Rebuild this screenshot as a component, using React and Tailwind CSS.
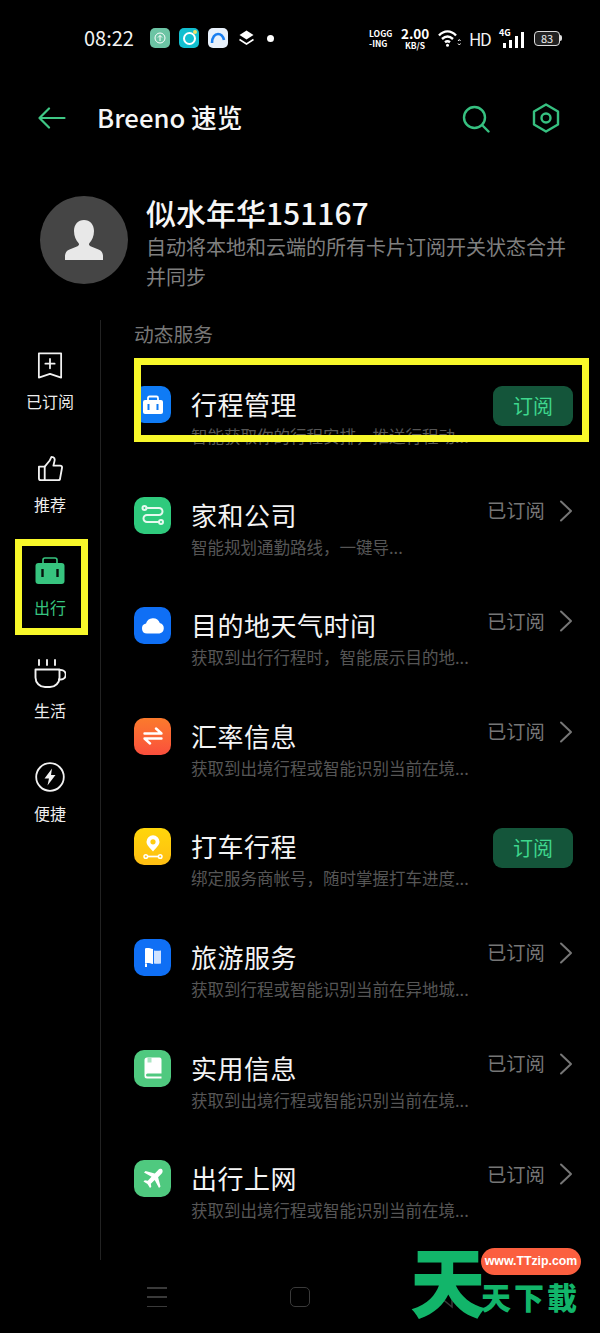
import React from "react";

const FONT = "font-['Noto_Sans_CJK_SC','Noto_Sans',sans-serif]";

// ── Sidebar icons ──────────────────────────────────────
function BookmarkIcon() {
  return (
    <svg width="26" height="29" viewBox="0 0 28 30" fill="none" stroke="#f2f2f2" strokeWidth="1.9" strokeLinejoin="round" strokeLinecap="round">
      <path d="M2 2h24v26l-12-4-12 4z" />
      <path d="M14 8v10M9 13h10" />
    </svg>
  );
}

function ThumbIcon() {
  return (
    <svg width="27" height="27" viewBox="0 0 28 28" fill="none" stroke="#f2f2f2" strokeWidth="1.9" strokeLinejoin="round" strokeLinecap="round">
      <path d="M2 12h6v14H4a2 2 0 0 1-2-2z" />
      <path d="M8 12l5-6 2-4c3 0 4 2 3 5l-1 4h7a2 2 0 0 1 2 2l-2 11a2 2 0 0 1-2 2H8" />
    </svg>
  );
}

function BagIcon() {
  return (
    <svg width="30" height="28" viewBox="0 0 30 28" fill="none">
      <path d="M8 7V3a2 2 0 0 1 2-2h10a2 2 0 0 1 2 2v4" stroke="#37c47f" strokeWidth="1.6" />
      <rect x="0.5" y="6" width="29" height="21" rx="3" fill="#37c47f" />
      <path d="M7.5 12v8M22.5 12v8" stroke="#06140d" strokeWidth="2.4" />
    </svg>
  );
}

function CupIcon() {
  return (
    <svg width="32" height="30" viewBox="0 0 32 30" fill="none" stroke="#f2f2f2" strokeWidth="1.9" strokeLinecap="round" strokeLinejoin="round">
      <path d="M5 1v5M13 1v5M21 1v5" />
      <path d="M1.500 10.500h24v8a9.500 9.500 0 0 1-9.500 9.500H11a9.500 9.500 0 0 1-9.500-9.500z" />
      <path d="M25.500 11h1.500a3.800 3.800 0 0 1 0 9.500h-2" />
    </svg>
  );
}

function BoltIcon() {
  return (
    <svg width="30" height="30" viewBox="0 0 30 30" fill="none">
      <circle cx="15" cy="15" r="13.800" stroke="#f2f2f2" strokeWidth="1.800" />
      <path d="M17 6.500L9.500 16.500h4.500L12.500 23.500l8-10.500H16z" fill="#f2f2f2" />
    </svg>
  );
}

// ── List tile glyphs ───────────────────────────────────
const glyphs = {
  bag: (
    <svg width="22" height="20" viewBox="0 0 22 20" fill="none">
      <path d="M6 6V3a1.500 1.500 0 0 1 1.500-1.500h7A1.500 1.500 0 0 1 16 3v3" stroke="#fff" strokeWidth="1.800" />
      <rect x="1" y="5" width="20" height="14" rx="2" fill="#fff" />
      <path d="M6.500 9v6M15.500 9v6" stroke="#0f7bf5" strokeWidth="2" />
    </svg>
  ),
  route: (
    <svg width="24" height="22" viewBox="0 0 24 22" fill="none" stroke="#e6f9ef" strokeWidth="2">
      <circle cx="3.500" cy="4" r="2" />
      <circle cx="20" cy="18" r="2" />
      <path d="M5.500 4H18a3.500 3.500 0 0 1 0 7H6a3.500 3.500 0 0 0 0 7h12" strokeLinecap="round" />
    </svg>
  ),
  cloud: (
    <svg width="24" height="17" viewBox="0 0 24 17">
      <path d="M6 16.500a5 5 0 0 1-1-9.900 7.200 7.200 0 0 1 13.800-.6A5.400 5.400 0 0 1 18.500 16.500z" fill="#fff" />
    </svg>
  ),
  swap: (
    <svg width="20" height="18" viewBox="0 0 20 18" fill="none" stroke="#fff" strokeWidth="2.400" strokeLinecap="round" strokeLinejoin="round">
      <path d="M1.500 6.500h17L13 1.500" />
      <path d="M18.500 11.500h-17L7 16.500" />
    </svg>
  ),
  pin: (
    <svg width="20" height="26" viewBox="0 0 20 26" fill="none" stroke="#fff">
      <path d="M10 17.500c-3.500-4-6.500-6.500-6.500-9.700a6.500 6.500 0 0 1 13 0c0 3.200-3 5.700-6.500 9.700z" fill="#fff" stroke="none" />
      <circle cx="10" cy="7.800" r="2.600" fill="#ffcd10" stroke="none" />
      <circle cx="2.800" cy="22.500" r="1.800" strokeWidth="1.500" />
      <circle cx="17.200" cy="22.500" r="1.800" strokeWidth="1.500" />
      <path d="M4.600 22.500h10.800" strokeWidth="1.700" />
    </svg>
  ),
  flag: (
    <svg width="18" height="20" viewBox="0 0 18 20">
      <path d="M1 1.500c3-1 5 0 8 .5v15c-3-.5-5-1.500-8-.5z" fill="#fff" />
      <path d="M2 16.500V20" stroke="#fff" strokeWidth="2" />
      <path d="M10 3.500c2.500.5 4.500.3 7 0v13c-2.500.3-4.500.5-7 0z" fill="#cfe2ff" />
    </svg>
  ),
  book: (
    <svg width="18" height="22" viewBox="0 0 18 22">
      <path d="M3 0.500h12.500a2 2 0 0 1 2 2V16.500H3.500a1.500 1.500 0 0 0 0 3h14V21.500H3a2.500 2.500 0 0 1-2.500-2.500V3A2.500 2.500 0 0 1 3 0.500z" fill="#fff" />
      <rect x="3.500" y="0.500" width="4" height="5" fill="#a9e6c2" />
    </svg>
  ),
  plane: (
    <svg width="22" height="22" viewBox="0 0 22 22">
      <path d="M20.500 1.500c-1.200-1.200-3.200-.6-4.500.7l-3.200 3.200L3.500 3 2 4.500l7.500 4.300-3.700 3.900-3-.5L1.500 13.500l4 2.500 2.500 4 1.300-1.300-.5-3 3.900-3.700L17 20l1.500-1.500-2.400-9.300 3.200-3.200c1.300-1.300 1.900-3.300.7-4.500z" fill="#fff" />
    </svg>
  ),
};

// ── Data ───────────────────────────────────────────────
const rows = [
  { title: "行程管理", sub: "智能获取你的行程安排，推送行程动...", tile: "bg-[#0f7bf5]", glyph: "bag", subscribed: false },
  { title: "家和公司", sub: "智能规划通勤路线，一键导...", tile: "bg-[#2fca7d]", glyph: "route", subscribed: true },
  { title: "目的地天气时间", sub: "获取到出行行程时，智能展示目的地...", tile: "bg-[#0f6ff5]", glyph: "cloud", subscribed: true },
  { title: "汇率信息", sub: "获取到出境行程或智能识别当前在境...", tile: "bg-linear-to-b from-[#fb7a2c] to-[#fa4e3c]", glyph: "swap", subscribed: true },
  { title: "打车行程", sub: "绑定服务商帐号，随时掌握打车进度...", tile: "bg-linear-to-b from-[#ffd60a] to-[#ffbe12]", glyph: "pin", subscribed: false },
  { title: "旅游服务", sub: "获取到行程或智能识别当前在异地城...", tile: "bg-[#0f6ff5]", glyph: "flag", subscribed: true },
  { title: "实用信息", sub: "获取到出境行程或智能识别当前在境...", tile: "bg-[#4fc97f]", glyph: "book", subscribed: true },
  { title: "出行上网", sub: "获取到出境行程或智能识别当前在境...", tile: "bg-[#4fc97f]", glyph: "plane", subscribed: true },
];

const tabs = [
  { label: "已订阅", icon: <BookmarkIcon /> },
  { label: "推荐", icon: <ThumbIcon /> },
  { label: "出行", icon: <BagIcon />, active: true },
  { label: "生活", icon: <CupIcon /> },
  { label: "便捷", icon: <BoltIcon /> },
];

function StatusBar() {
  return (
    <div className="h-[76px] flex items-center pl-[84px] pr-[38px] text-white">
      <span className="text-[20px] leading-none w-[66px] text-[#f4f4f4]">08:22</span>
      <div className="flex items-center gap-[9px]">
        <div className="w-5 h-5 rounded-[5px] bg-[#6cc4a4] flex items-center justify-center">
          <svg width="12" height="12" viewBox="0 0 12 12" fill="none" stroke="#fff" strokeWidth="1">
            <circle cx="6" cy="6" r="5" />
            <path d="M6 9V3.500M4 5.500l2-2 2 2" />
          </svg>
        </div>
        <div className="relative w-5 h-5 rounded-[5px] bg-[#12bfd0] flex items-center justify-center">
          <div className="w-[13px] h-[13px] rounded-full border-[2.500px] border-white" />
          <div className="absolute right-[2px] top-[2px] w-[4px] h-[4px] rounded-full bg-[#f3e36a]" />
        </div>
        <div className="w-5 h-5 rounded-[5px] bg-[#e8f1fb] flex items-center justify-center">
          <svg width="16" height="14" viewBox="0 0 16 14" fill="none" stroke="#1a7ff0" strokeWidth="2.600">
            <path d="M2 12c0-6 3-9 6-9s5 2 6 6" />
          </svg>
        </div>
        <svg className="ml-[2px]" width="15" height="16" viewBox="0 0 15 16" fill="#fff">
          <path d="M7.500 0.500L14.500 5l-7 4.500L0.500 5z" />
          <path d="M0.500 9.500l7 4.500 7-4.500" fill="none" stroke="#fff" strokeWidth="1.500" />
        </svg>
        <div className="ml-[4px] w-[7px] h-[7px] rounded-full bg-white" />
      </div>
      <div className="ml-auto flex items-center">
        <div className="w-[24px] text-[8.500px] leading-[10px] font-bold text-white">
          <div>LOGG</div>
          <div>-ING</div>
        </div>
        <div className="ml-[8px] w-[28px] text-center font-bold">
          <div className="text-[13.500px] leading-[14px]">2.00</div>
          <div className="text-[8.500px] leading-[10px]">KB/S</div>
        </div>
        <svg className="ml-[9px]" width="23" height="18" viewBox="0 0 23 18" fill="none" stroke="#fff" strokeWidth="2.400">
          <path d="M1 6.500c5-5.500 12-5.500 17 0M4 10c3.500-3.200 7.500-3.200 11 0M7 13.300c1.500-1.200 3.500-1.200 5 0" />
          <circle cx="9.500" cy="16.300" r="1.500" fill="#fff" stroke="none" />
          <path d="M20 12l1.300-1.500 1.200 1.500M20 14.500l1.300 1.500 1.200-1.500" strokeWidth="1" />
        </svg>
        <span className="ml-[8px] w-[20px] text-[17px] leading-none text-[#f2f2f2] tracking-[-1.500px]">HD</span>
        <div className="ml-[10px] relative w-[25px] h-[20px]">
          <span className="absolute left-0 top-0 text-[9px] leading-[10px] font-bold">4G</span>
          <div className="absolute right-0 bottom-0 flex items-end gap-[3px]">
            <div className="w-[3px] h-[5px] bg-white" />
            <div className="w-[3px] h-[8px] bg-white" />
            <div className="w-[3px] h-[12px] bg-white" />
            <div className="w-[3px] h-[16px] bg-white" />
          </div>
        </div>
        <div className="ml-[10px] flex items-center">
          <div className="w-[26px] h-[15px] rounded-[4px] border border-[#dcdcdc] bg-[#222] flex items-center justify-center text-[11px] leading-none text-[#eee]">
            83
          </div>
          <div className="w-[2px] h-[6px] bg-[#dcdcdc] rounded-r-sm" />
        </div>
      </div>
    </div>
  );
}

function AppBar() {
  return (
    <div className="h-[84px] flex items-center pl-[38px] pr-[40px]">
      <svg width="28" height="22" viewBox="0 0 28 22" fill="none" stroke="#3fc785" strokeWidth="2.200" strokeLinecap="round" strokeLinejoin="round">
        <path d="M1.500 11h25M11 1.500L1.500 11l9.500 9.500" />
      </svg>
      <h1 className="ml-[31px] -mt-[3px] text-[25.700px] leading-none font-medium text-[#f6f6f6]">Breeno 速览</h1>
      <div className="ml-auto flex items-center gap-[42px]">
        <svg className="mt-[1px]" width="28" height="28" viewBox="0 0 28 28" fill="none" stroke="#36c080" strokeWidth="2.400" strokeLinecap="round">
          <circle cx="12.500" cy="12.500" r="10.500" />
          <path d="M20.500 20.500l6 6" />
        </svg>
        <svg width="28" height="30" viewBox="0 0 28 30" fill="none" stroke="#36c080" strokeWidth="2.400" strokeLinejoin="round">
          <path d="M14 1.500l12 7v13l-12 7-12-7v-13z" />
          <circle cx="14" cy="15" r="4.500" />
        </svg>
      </div>
    </div>
  );
}

function Profile() {
  return (
    <div className="h-[160px] flex pl-[40px] pr-[30px] pt-[36px]">
      <div className="w-[88px] h-[88px] shrink-0 rounded-full bg-[#454545] flex items-center justify-center">
        <svg width="40" height="42" viewBox="0 0 40 42" fill="#e8e8e8">
          <path d="M20 1c6 0 10 4.500 10 11 0 5-2 9.500-4.500 12-1 1.200-.5 2.500 1 3.200l8 3.300c3 1.200 4.500 3.500 4.500 6.500V41H1v-4c0-3 1.500-5.300 4.500-6.500l8-3.300c1.500-.7 2-2 1-3.200C12 21.500 10 17 10 12 10 5.500 14 1 20 1z" />
        </svg>
      </div>
      <div className="ml-[18px] -mt-[2px]">
        <div className="text-[30px] leading-[36px] font-medium text-[#f6f6f6]">似水年华151167</div>
        <p className="text-[20px] leading-[30px] text-[#7f7f7f] mt-[2px]">自动将本地和云端的所有卡片订阅开关状态合并并同步</p>
      </div>
    </div>
  );
}

function Sidebar() {
  return (
    <aside className="w-[101px] h-[940px] shrink-0 border-r border-[#222] pt-[28px]">
      {tabs.map((t) => (
        <div key={t.label} className="h-[103px] flex flex-col items-center">
          <div className="h-[34px] flex items-center justify-center">{t.icon}</div>
          <span className={`mt-[7px] text-[16px] leading-[24px] ${t.active ? "text-[#37c47f]" : "text-[#ededed]"}`}>{t.label}</span>
        </div>
      ))}
    </aside>
  );
}

function Row({ row }) {
  return (
    <div className="h-[110.600px] flex">
      <div className={`w-[37px] h-[37px] rounded-[10px] shrink-0 flex items-center justify-center ${row.tile}`}>
        {glyphs[row.glyph]}
      </div>
      <div className="ml-[20px] w-[290px] shrink-0">
        <div className="-mt-[1px] text-[26px] leading-[38px] text-[#f4f4f4] tracking-[0.500px]">{row.title}</div>
        <div className="mt-[1px] text-[16.500px] leading-[24px] text-[#565656] whitespace-nowrap">{row.sub}</div>
      </div>
      {row.subscribed ? (
        <div className="ml-[6px] h-[30px] -mt-[1px] flex items-center">
          <span className="text-[19.300px] leading-none text-[#767676]">已订阅</span>
          <svg className="ml-[14px]" width="14" height="22" viewBox="0 0 14 22" fill="none" stroke="#767676" strokeWidth="2" strokeLinecap="round" strokeLinejoin="round">
            <path d="M2 1.500L12 11 2 20.500" />
          </svg>
        </div>
      ) : (
        <div className="ml-[12px] w-[80px] h-[40px] rounded-[9px] bg-[#14553a] flex items-center justify-center text-[20px] leading-none text-[#3ed78d]">
          订阅
        </div>
      )}
    </div>
  );
}

function NavBar() {
  return (
    <div className="absolute left-0 right-0 top-[1287px] h-[20px]">
      <div className="absolute left-[147px] top-0 w-[20px] h-[20px] flex flex-col justify-between">
        <div className="h-[1.500px] bg-[#3a3a3a]" />
        <div className="h-[1.500px] bg-[#3a3a3a]" />
        <div className="h-[1.500px] bg-[#3a3a3a]" />
      </div>
      <div className="absolute left-[290px] top-0 w-[20px] h-[20px] rounded-[5px] border-[1.500px] border-[#3a3a3a]" />
      <svg className="absolute left-[438px] top-[-2px]" width="16" height="24" viewBox="0 0 16 24" fill="none" stroke="#3a3a3a" strokeWidth="1.500">
        <path d="M14 2v20L2 12z" />
      </svg>
    </div>
  );
}

function Watermark() {
  return (
    <div className="absolute left-[410px] top-[1232px] w-[180px] h-[98px]">
      <span className="absolute left-0 top-0 text-[76px] leading-[94px] font-black text-[#12b56a]">天</span>
      <div className="absolute left-[71px] top-[16px] w-[100px] h-[27px] rounded-full bg-[#fb5f3f] flex items-center justify-center text-[12.300px] leading-none font-bold text-white font-['Liberation_Sans',sans-serif]">
        www.TTzip.com
      </div>
      <span className="absolute left-[71px] top-[44px] text-[30px] leading-[40px] font-black text-[#12b56a] tracking-[3px] whitespace-nowrap">天下載</span>
    </div>
  );
}

export default function App() {
  return (
    <div className={`relative w-[600px] h-[1333px] bg-black overflow-hidden ${FONT}`}>
      <StatusBar />
      <AppBar />
      <Profile />
      <div className="flex">
        <Sidebar />
        <main className="pl-[33px]">
          <div className="h-[66px] text-[19.800px] leading-[28px] text-[#777]">动态服务</div>
          {rows.map((r) => (
            <Row key={r.title} row={r} />
          ))}
        </main>
      </div>

      {/* yellow annotation boxes */}
      <div className="absolute left-[134px] top-[358px] w-[455px] h-[84px] border-[7px] border-[#f8f82a]" />
      <div className="absolute left-[15px] top-[539px] w-[73px] h-[96px] border-[7px] border-[#f8f82a]" />

      <NavBar />
      <Watermark />
    </div>
  );
}
